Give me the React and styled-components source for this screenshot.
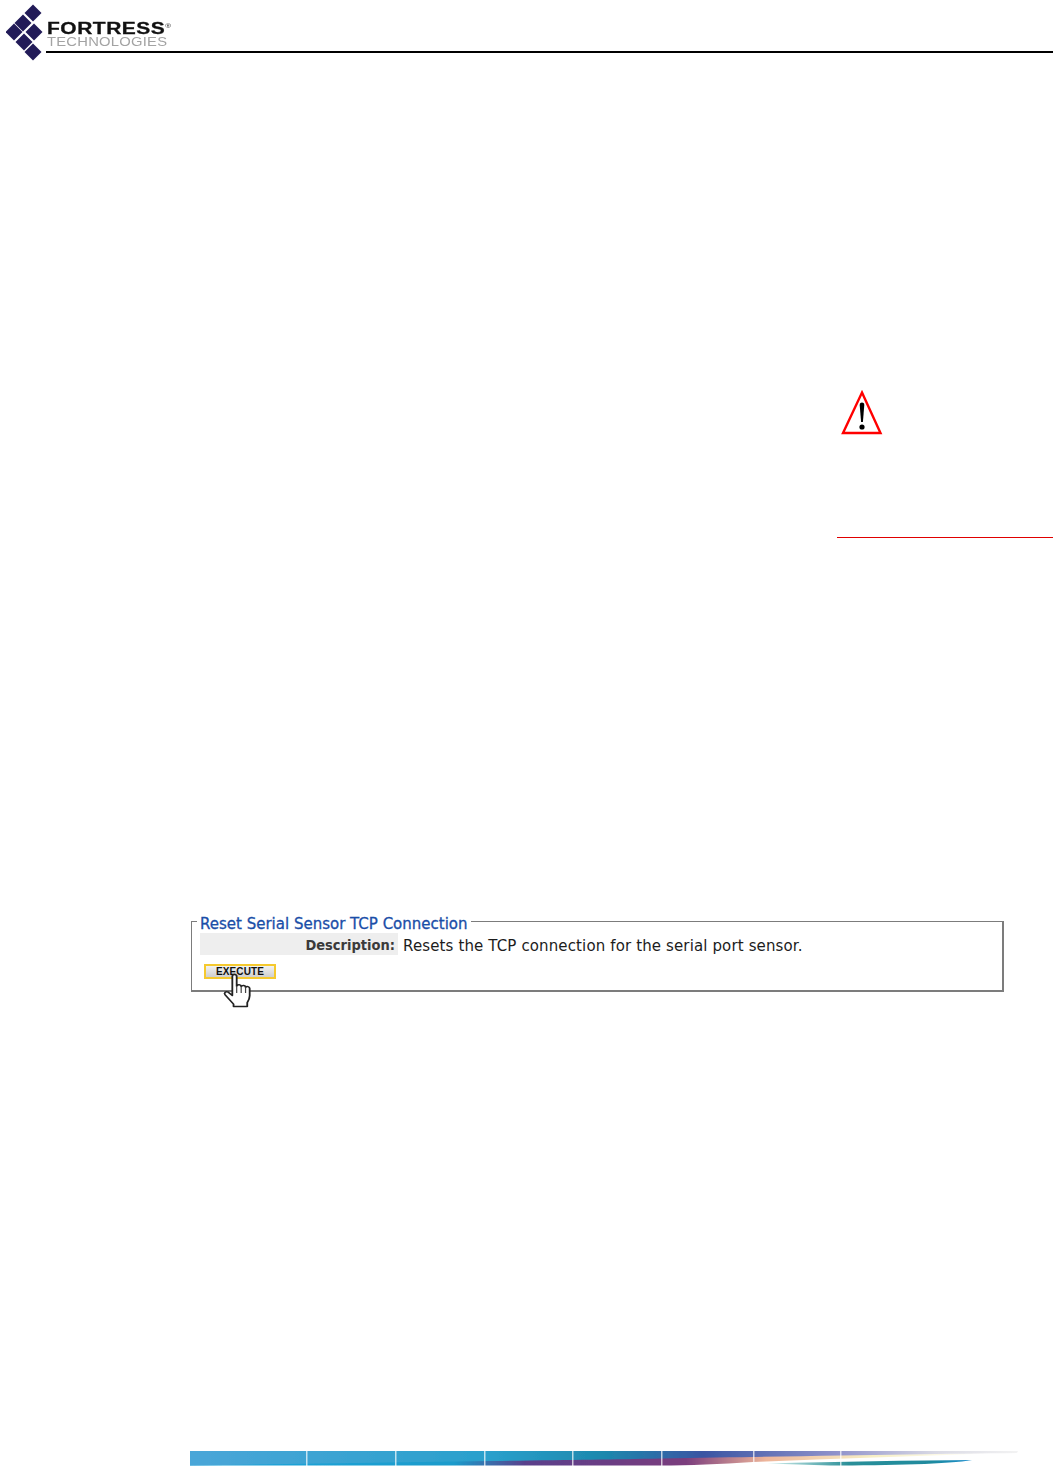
import React from 'react'
import styled, { createGlobalStyle } from 'styled-components'

const GlobalStyle = createGlobalStyle`
  html, body {
    margin: 0;
    padding: 0;
    background: #fff;
  }
`

const Page = styled.div`
  width: 1053px;
  height: 1470px;
  display: flex;
  flex-direction: column;
  overflow: hidden;
  font-family: 'DejaVu Sans', Verdana, sans-serif;
`

const Header = styled.header`
  height: 62px;
  flex: none;
  display: flex;
  align-items: flex-start;
  padding: 3px 0 0 6px;
  box-sizing: border-box;
`

const Brand = styled.div`
  flex: 1;
  height: 50px;
  padding: 16px 0 0 1px;
  box-sizing: border-box;
  border-bottom: 2px solid #000;
`

const BrandName = styled.div`
  font: 700 16px/14px 'Liberation Sans', Arial, sans-serif;
  color: #111;
  letter-spacing: 0.4px;
  -webkit-text-stroke: 0.3px #111;
  transform: scaleX(1.31);
  transform-origin: left center;
`

const BrandMark = styled.span`
  font-size: 6px;
  font-weight: 400;
  letter-spacing: 0;
  vertical-align: 6px;
  -webkit-text-stroke: 0;
`

const BrandSub = styled.div`
  margin-top: 1px;
  font: 400 12px/10px 'Liberation Sans', Arial, sans-serif;
  color: #a3a3a3;
  letter-spacing: 0.2px;
  transform: scaleX(1.23);
  transform-origin: left center;
`

const NoteRow = styled.section`
  display: flex;
  justify-content: flex-end;
`

const Note = styled.aside`
  width: 216px;
  height: 476px;
  padding: 327px 0 0 4px;
  box-sizing: border-box;
  border-bottom: 1px solid #e00000;
`

const Panel = styled.fieldset`
  position: relative;
  width: 813px;
  height: 82px;
  margin: 372px 0 0 191px;
  padding: 0 8px;
  box-sizing: border-box;
  border: 1px solid #7c7c7c;
  border-width: 1px 2px 2px 1px;
`

const PanelTitle = styled.legend`
  padding: 6px 3px 0 3px;
  margin-left: -3px;
  font-size: 15px;
  font-weight: 400;
  line-height: 17px;
  color: #1a4ea8;
  -webkit-text-stroke: 0.3px #1a4ea8;
`

const Row = styled.div`
  display: flex;
  height: 22px;
  align-items: flex-start;
`

const RowLabel = styled.div`
  width: 198px;
  height: 100%;
  padding-right: 3px;
  box-sizing: border-box;
  background: #eeeeee;
  text-align: right;
  font-family: 'DejaVu Sans Condensed', 'DejaVu Sans', sans-serif;
  font-size: 14.5px;
  line-height: 25px;
  font-weight: 700;
  color: #3a3a3a;
`

const RowValue = styled.div`
  margin-left: 5px;
  font-size: 15px;
  line-height: 26px;
  letter-spacing: 0.13px;
  color: #1c1c1c;
`

const ExecuteButton = styled.button`
  display: block;
  width: 72px;
  height: 15px;
  margin: 9px 0 0 4px;
  padding: 0;
  border: 2px solid #f5c92e;
  background: linear-gradient(#f2f2f2, #cfcfcf);
  font: 700 10px/11px 'Liberation Sans', Arial, sans-serif;
  letter-spacing: 0.1px;
  color: #111;
`

const HandCursor = styled.svg`
  position: absolute;
  left: 30px;
  top: 40px;
  width: 34px;
  height: 37px;
`

const Footer = styled.footer`
  margin: 458px 0 0 190px;
  width: 830px;
  height: 19px;
`

const Mark = () => (
  <svg width="40" height="58" viewBox="0 0 40 58" style={{ flex: 'none' }}>
    {[
      [27, 10],
      [17, 20],
      [8, 29],
      [28, 29],
      [18, 39],
      [27, 49]
    ].map(([x, y]) => (
      <polygon
        key={`${x}-${y}`}
        points={`${x},${y - 8.5} ${x + 8.5},${y} ${x},${y + 8.5} ${x - 8.5},${y}`}
        fill="#221b58"
      />
    ))}
  </svg>
)

const WarningIcon = () => (
  <svg width="42" height="47" viewBox="0 0 42 47">
    <polygon points="21,3.5 39.5,44 2,44" fill="#fff" stroke="#f00" strokeWidth="2.4" />
    <path d="M18.7 16c0-3.200 4.600-3.200 4.600 0L21.900 33h-1.800z" fill="#000" />
    <circle cx="21" cy="38" r="2.600" fill="#000" />
  </svg>
)

const Hand = () => (
  <HandCursor viewBox="0 0 28 38" preserveAspectRatio="none">
    <path
      d="M8.500 3.500c0-2.600 3.600-2.600 3.600 0v10c.6-2 3.600-1.800 3.700.4.8-1.800 3.600-1.400 3.600.8.9-1.400 3.400-.9 3.400 1.200v7.500c0 3-1 5-2 7v4H9.500v-2.500L2.600 22.500c-1.400-2 .6-4.200 2.600-2.800l3.300 3.300z"
      fill="#fff"
      stroke="#222"
      strokeWidth="1.500"
      strokeLinejoin="round"
    />
    <path d="M12.100 13.500v7M15.800 14v6.500M19.400 15v5.500" stroke="#444" strokeWidth="1" fill="none" />
  </HandCursor>
)

const SwooshBar = () => (
  <svg width="830" height="19" viewBox="0 0 830 19">
    <defs>
      <filter id="soft" x="-1%" y="-20%" width="102%" height="140%">
        <feGaussianBlur stdDeviation="0.6" />
      </filter>
      <linearGradient id="swooshTop" x1="0" x2="1" y1="0" y2="0">
        <stop offset="0" stopColor="#4aa6d8" />
        <stop offset="0.36" stopColor="#2aa0cc" />
        <stop offset="0.5" stopColor="#1d88ad" />
        <stop offset="0.62" stopColor="#3a55a3" />
        <stop offset="0.78" stopColor="#8f92cb" />
        <stop offset="0.9" stopColor="#d9d9e4" />
        <stop offset="1" stopColor="#f3f3f3" />
      </linearGradient>
      <linearGradient id="swooshLow" x1="0" x2="1" y1="0" y2="0">
        <stop offset="0" stopColor="#1fa6dc" />
        <stop offset="0.33" stopColor="#1b9bcb" />
        <stop offset="0.42" stopColor="#5a3f8b" />
        <stop offset="0.62" stopColor="#7b3d7d" />
        <stop offset="0.72" stopColor="#eeb59a" />
        <stop offset="0.85" stopColor="#f7efc4" />
        <stop offset="1" stopColor="#ffffff" />
      </linearGradient>
      <linearGradient id="swooshTail" x1="0" x2="1" y1="0" y2="0">
        <stop offset="0" stopColor="#d5f0ec" />
        <stop offset="0.4" stopColor="#2a8f98" />
        <stop offset="0.8" stopColor="#1f8a9e" />
        <stop offset="1" stopColor="#1f8fd0" />
      </linearGradient>
    </defs>
    <g filter="url(#soft)">
      <path d="M0 8 L800 3.500 C 720 6 640 9 563 12 C 530 14 500 15.500 470 15.500 H0Z" fill="url(#swooshLow)" />
      <path d="M0 1 H828 L 827 3 C 740 4 650 5.500 470 8.500 C 420 9.500 380 10 300 11 L 0 15.500Z" fill="url(#swooshTop)" />
      <path d="M577 13.500 C 650 11.500 720 10.500 782 10 C 760 14 700 15.500 640 15.500 Z" fill="url(#swooshTail)" />
    </g>
    {[116, 205, 294, 382, 471, 563, 650].map((x) => (
      <rect key={x} x={x} y="0" width="1.500" height="18" fill="#fff" opacity="0.7" />
    ))}
  </svg>
)

export default function App() {
  return (
    <Page>
      <GlobalStyle />
      <Header>
        <Mark />
        <Brand>
          <BrandName>
            FORTRESS<BrandMark>®</BrandMark>
          </BrandName>
          <BrandSub>TECHNOLOGIES</BrandSub>
        </Brand>
      </Header>
      <NoteRow>
        <Note>
          <WarningIcon />
        </Note>
      </NoteRow>
      <Panel>
        <PanelTitle>Reset Serial Sensor TCP Connection</PanelTitle>
        <Row>
          <RowLabel>Description:</RowLabel>
          <RowValue>Resets the TCP connection for the serial port sensor.</RowValue>
        </Row>
        <ExecuteButton>EXECUTE</ExecuteButton>
        <Hand />
      </Panel>
      <Footer>
        <SwooshBar />
      </Footer>
    </Page>
  )
}
